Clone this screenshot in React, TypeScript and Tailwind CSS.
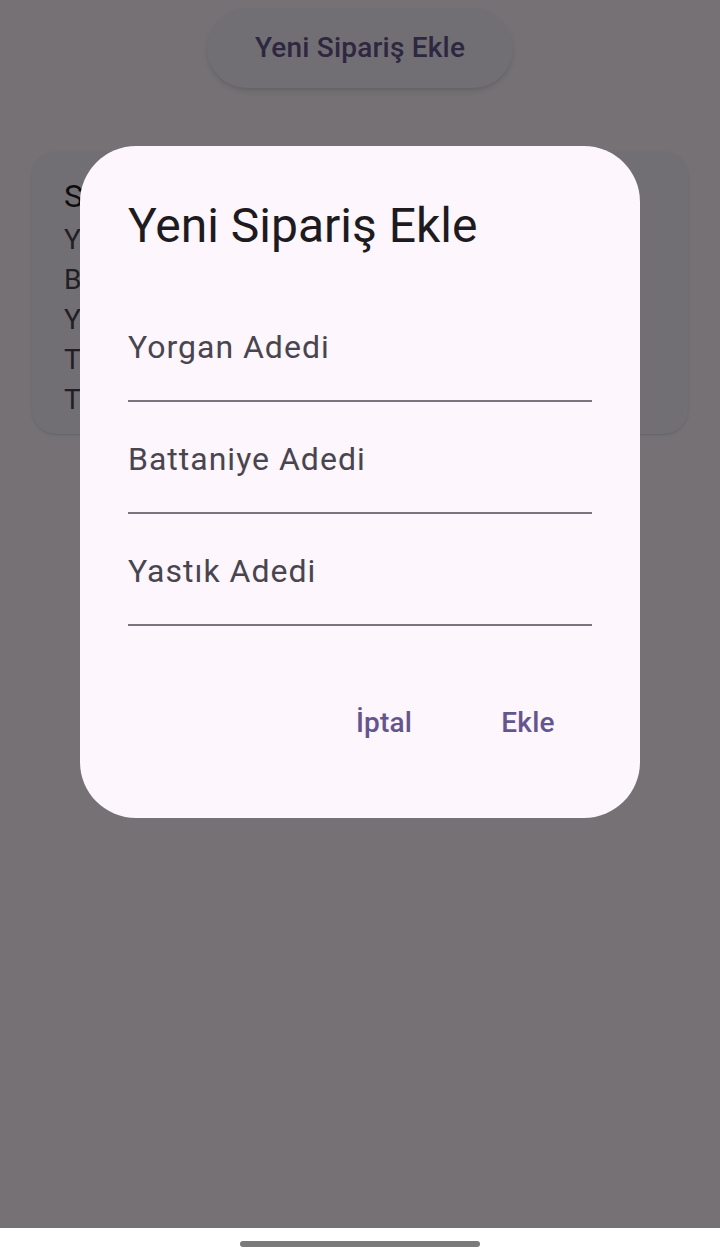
import React from 'react';

const fields = ['Yorgan Adedi', 'Battaniye Adedi', 'Yastık Adedi'];

const orderLines = ['Yorgan: 2', 'Battaniye: 1', 'Yastık: 3', 'Toplam Adet: 6', 'Tarih: 12.05.2024'];

function App() {
  return (
    <div className="relative w-[720px] h-[1260px] bg-white font-['Roboto',sans-serif] overflow-hidden">
      {/* Page behind the dialog */}
      <div className="h-[1228px] bg-[#fef7ff] flex flex-col items-center pt-[8px]">
        <button className="h-[80px] px-[48px] rounded-full bg-[#f7f2fa] shadow-md text-[28px] font-medium tracking-[0.2px] text-[#65558f]">
          Yeni Sipariş Ekle
        </button>
        <div className="mt-[64px] w-[656px] rounded-[24px] bg-[#f7f2fa] shadow-sm px-[32px] pt-[20px] pb-[14px]">
          <div className="text-[32px] leading-[48px] text-[#1d1b20]">Sipariş #1</div>
          {orderLines.map(line => (
            <div key={line} className="text-[28px] leading-[40px] text-[#49454f]">
              {line}
            </div>
          ))}
        </div>
      </div>

      {/* System navigation bar */}
      <div className="h-[32px] flex items-center justify-center">
        <div className="w-[240px] h-[6px] rounded-full bg-[#7a7a7a]"></div>
      </div>

      {/* Scrim + dialog */}
      <div className="absolute left-0 top-0 w-[720px] h-[1228px] bg-[rgba(0,0,0,0.54)]">
        <div className="ml-[80px] mt-[146px] w-[560px] rounded-[56px] bg-[#fdf6fc] px-[48px] pt-[48px] pb-[55px]">
          <h2 className="text-[48px] leading-[64px] text-[#1d1b20]">Yeni Sipariş Ekle</h2>
          <div className="mt-[32px]">
            {fields.map(label => (
              <div key={label} className="pt-[33px] pb-[29px] border-b-2 border-[#79747e]">
                <div className="text-[32px] leading-[48px] tracking-[1px] text-[#49454f]">{label}</div>
              </div>
            ))}
          </div>
          <div className="mt-[57px] flex justify-end gap-[16px]">
            <button className="h-[80px] min-w-[128px] px-[24px] flex items-center justify-center text-[28px] leading-[40px] font-medium tracking-[0.2px] text-[#65558f]">
              İptal
            </button>
            <button className="h-[80px] min-w-[128px] px-[24px] flex items-center justify-center text-[28px] leading-[40px] font-medium tracking-[0.2px] text-[#65558f]">
              Ekle
            </button>
          </div>
        </div>
      </div>
    </div>
  );
}

export default App;
